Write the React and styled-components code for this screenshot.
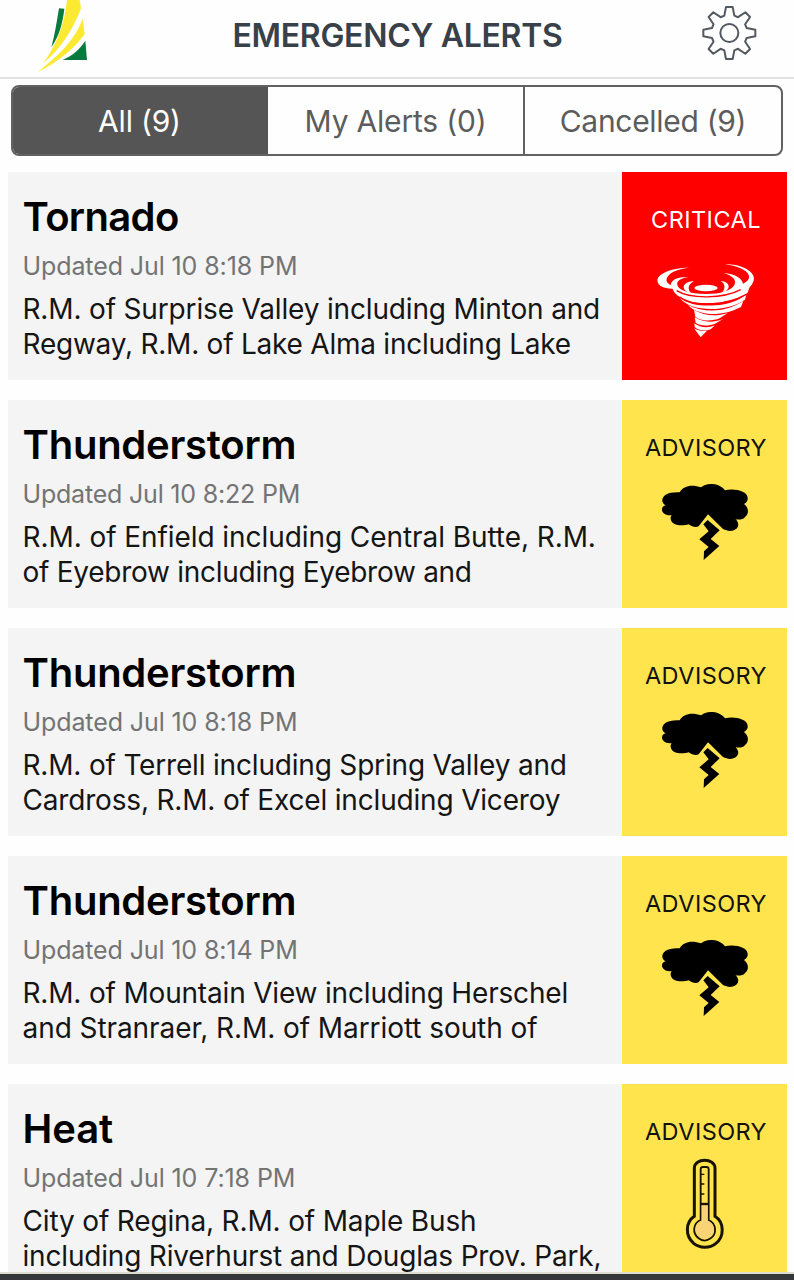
import React from 'react';
import styled, { createGlobalStyle, css } from 'styled-components';

const GlobalStyle = createGlobalStyle`
  * {
    box-sizing: border-box;
  }

  body {
    margin: 0;
    background-color: #fefefe;
    font-family: Inter, 'Liberation Sans', sans-serif;
    overflow: hidden;
  }
`;

const Screen = styled.div`
  display: flex;
  flex-direction: column;
  width: 794px;
  height: 1280px;
  overflow: hidden;
`;

const Header = styled.header`
  flex: none;
  display: grid;
  grid-template-columns: 90px 1fr 104px;
  height: 79px;
  padding-left: 20px;
  border-bottom: 2px solid #e1e1e1;
`;

const Title = styled.h1`
  margin: 0;
  padding-right: 5px;
  color: #38414a;
  font-size: 32px;
  font-weight: 600;
  line-height: 71px;
  letter-spacing: -0.3px;
  text-align: center;
  white-space: nowrap;
`;

const Icon = styled.svg`
  display: block;
  flex: none;
`;

const Tabs = styled.nav`
  flex: none;
  display: grid;
  grid-template-columns: 255px 257px 1fr;
  height: 71px;
  margin: 6px 11px 0;
  border: 2px solid #626262;
  border-radius: 8px;
  overflow: hidden;
`;

const Tab = styled.button`
  padding: 1px 0 0;
  border: none;
  border-right: 2px solid #626262;
  background-color: transparent;
  color: #5c5c5c;
  font-family: inherit;
  font-size: 30px;
  font-weight: 400;
  letter-spacing: ${(props) => props.$spacing}px;
  white-space: nowrap;

  &:last-child {
    border-right: none;
  }

  ${(props) =>
    props.$active &&
    css`
      background-color: #555;
      border-color: #555;
      color: #fff;
    `}
`;

const AlertList = styled.main`
  flex: 1;
  min-height: 0;
  display: flex;
  flex-direction: column;
  gap: 20px;
  padding: 15.5px 7px 0 7.5px;
  overflow: hidden;
`;

const Card = styled.article`
  flex: none;
  display: flex;
  height: 208px;
  background-color: #f4f4f4;
`;

const CardBody = styled.div`
  flex: 1;
  padding: 19px 0 0 15px;
  white-space: nowrap;
`;

const AlertName = styled.h2`
  margin: 0;
  color: #000;
  font-size: 40px;
  font-weight: 600;
  line-height: 52px;
  letter-spacing: ${(props) => props.$spacing}px;
`;

const Updated = styled.div`
  margin-top: 5px;
  color: #737373;
  font-size: 25px;
  line-height: 36px;
  letter-spacing: ${(props) => props.$spacing}px;
`;

const Areas = styled.div`
  margin-top: 8px;
`;

const AreaLine = styled.div`
  color: #151515;
  font-size: 28px;
  line-height: 35px;
  letter-spacing: ${(props) => props.$spacing}px;
`;

const Severity = styled.div`
  display: flex;
  flex-direction: column;
  align-items: center;
  width: 165px;
  padding-top: 30px;
  background-color: ${(props) => (props.$critical ? '#fe0000' : '#ffe44d')};
  color: ${(props) => (props.$critical ? '#fff' : '#111')};
`;

const SeverityLabel = styled.div`
  height: 40px;
  padding-left: 3px;
  font-size: 23.5px;
  line-height: 36px;
  letter-spacing: 0.45px;
`;

const BottomBar = styled.footer`
  flex: none;
  height: 8px;
  border-top: 2px solid #dedcd2;
  background-color: #34383b;
`;

function Logo() {
  return (
    <Icon width="90" height="77" viewBox="0 0 270 231">
      <path d="M117 25 L133 26 C128 70 118 107 94 142 C104 105 110 67 117 25Z" fill="#087a3d" />
      <path d="M141 0 H179 L183 25 C164 77 127 145 69 190 C103 145 134 80 141 0Z" fill="#fbe932" />
      <path d="M188 56 L194 103 C165 143 112 190 54 215 C111 170 164 122 188 56Z" fill="#fbe932" />
      <path d="M196 122 L201 180 H128 C157 166 178 150 196 122Z" fill="#087a3d" />
    </Icon>
  );
}

// one tooth, repeated every 45 degrees
const tooth = [
  [-15, -52],
  [-10, -78],
  [10, -78],
  [15, -52],
];

const gearPoints = Array.from({ length: 8 }, (_, i) => {
  const a = (i * Math.PI) / 4;
  return tooth.map(([x, y]) => [
    (118 + x * Math.cos(a) - y * Math.sin(a)).toFixed(1),
    (99 + x * Math.sin(a) + y * Math.cos(a)).toFixed(1),
  ]);
}).flat();

function Gear() {
  return (
    <Icon width="104" height="77" viewBox="0 0 312 231" fill="none" stroke="#535960" strokeWidth="6">
      <polygon points={gearPoints.map((p) => p.join(',')).join(' ')} strokeLinejoin="round" />
      <circle cx="118" cy="99" r="27" />
    </Icon>
  );
}

function Tornado() {
  return (
    <Icon width="130" height="108" viewBox="0 -24 390 324" fill="#fff">
      <path d="M148 53 C103 52 54 68 52 91 C53 109 75 117 98 116 C105 144 150 155 205 153 C258 151 307 134 330 111 C348 91 346 74 321 58 C303 47 278 43 255 43 C291 48 320 59 326 75 C330 85 324 93 309 101 C307 86 286 71 250 69 C278 77 291 91 283 105 C275 122 240 132 198 132 C149 132 116 121 112 105 C109 94 122 84 145 81 C113 80 94 89 92 105 C79 99 77 91 82 82 C90 66 115 57 148 53Z" />
      <path d="M162 94 C143 94 130 102 131 113 C133 122 141 127 153 129 C143 120 142 103 162 94Z" />
      <path d="M242 93 C257 94 267 101 266 111 C265 119 258 124 246 128 C256 117 257 102 242 93Z" />
      <ellipse cx="198" cy="114" rx="35" ry="10" />
      <path d="M102 119 C117 145 153 151 202 149 C255 147 300 133 329 112 L322 130 C289 151 246 160 202 160 C151 159 116 147 102 119Z" />
      <path d="M119 143 C147 164 184 169 226 166 C263 164 296 151 319 134 L315 149 C286 168 250 177 214 177 C170 176 137 167 119 143Z" />
      <path d="M144 165 C181 184 225 186 263 175 C281 170 297 161 310 153 L303 171 C276 185 244 193 212 192 C182 190 160 182 144 165Z" />
      <path d="M162 180 C195 198 228 201 264 188 L239 205 C216 214 180 214 166 200Z" />
      <path d="M164 202 C191 218 218 219 249 207 L225 221 C206 229 179 228 167 218Z" />
      <path d="M163 220 C182 234 204 235 225 226 L212 238 C194 245 174 241 164 231Z" />
      <path d="M162 235 C175 243 187 244 201 242 L182 262Z" />
      {/* gaps between the bands */}
      <g fill="none" stroke="#fe0000" strokeWidth="4">
        <path d="M110 122 C150 147 250 147 302 119" />
        <path d="M119 141 C158 171 253 169 321 132" />
      </g>
    </Icon>
  );
}

function Thunderstorm() {
  return (
    <Icon width="130" height="100" viewBox="0 0 390 300">
      <path
        d="M67 94 C65 77 83 65 119 67 C130 48 154 42 184 52 C194 38 238 36 255 61 C281 54 323 62 323 84 C324 91 320 98 312 102 C326 112 328 131 316 140 C309 149 299 150 287 148 C303 164 293 182 270 183 C263 182 257 181 249 177 L204 133 L176 169 C168 173 157 171 146 163 C127 169 91 168 92 143 C92 140 94 137 95 135 C77 138 65 128 66 117 C67 111 71 108 77 106 C71 103 68 99 67 94Z"
        fill="#000"
      />
      <path d="M190 163 L203 150 L239 181 L212 207 L238 228 L191 270 L192 244 L206 231 L178 208 L206 184Z" fill="#000" />
    </Icon>
  );
}

function Thermometer() {
  return (
    <Icon width="90" height="130" viewBox="0 9 270 390" fill="none">
      <path
        d="M103 196 V52 C103 20 165 20 165 52 V196 C193 214 194 257 167 278 C148 293 119 292 101 277 C75 254 76 214 103 196Z"
        stroke="#171300"
        strokeWidth="9"
      />
      <path
        d="M122 207 V55 Q122 48 129 48 H139 Q146 48 146 55 V207 C170 218 171 249 152 262 C140 271 126 270 115 261 C97 247 98 217 122 207Z"
        fill="#ffe44d"
        stroke="#171300"
        strokeWidth="5.5"
      />
      <path d="M125 162 H143 V209 C167 220 167 247 149 259 C139 266 126 266 118 258 C102 246 103 217 125 209Z" fill="#f8d476" />
      <path d="M122 159 H146" stroke="#171300" strokeWidth="7" />
      <path d="M123 70 H133 M123 99 H133 M123 129 H133" stroke="#171300" strokeWidth="4" />
    </Icon>
  );
}

// lines: [text, letter spacing]
const alerts = [
  {
    name: 'Tornado',
    nameSpacing: -0.65,
    updated: 'Updated Jul 10 8:18 PM',
    updatedSpacing: -0.1,
    critical: true,
    icon: Tornado,
    lines: [
      ['R.M. of Surprise Valley including Minton and', -0.16],
      ['Regway, R.M. of Lake Alma including Lake', -0.23],
    ],
  },
  {
    name: 'Thunderstorm',
    nameSpacing: -0.25,
    updated: 'Updated Jul 10 8:22 PM',
    updatedSpacing: -0.2,
    icon: Thunderstorm,
    lines: [
      ['R.M. of Enfield including Central Butte, R.M.', -0.07],
      ['of Eyebrow including Eyebrow and', -0.27],
    ],
  },
  {
    name: 'Thunderstorm',
    nameSpacing: -0.25,
    updated: 'Updated Jul 10 8:18 PM',
    updatedSpacing: -0.1,
    icon: Thunderstorm,
    lines: [
      ['R.M. of Terrell including Spring Valley and', -0.18],
      ['Cardross, R.M. of Excel including Viceroy', -0.18],
    ],
  },
  {
    name: 'Thunderstorm',
    nameSpacing: -0.25,
    updated: 'Updated Jul 10 8:14 PM',
    updatedSpacing: -0.12,
    icon: Thunderstorm,
    lines: [
      ['R.M. of Mountain View including Herschel', -0.18],
      ['and Stranraer, R.M. of Marriott south of', -0.07],
    ],
  },
  {
    name: 'Heat',
    nameSpacing: -0.1,
    updated: 'Updated Jul 10 7:18 PM',
    updatedSpacing: -0.1,
    icon: Thermometer,
    lines: [
      ['City of Regina, R.M. of Maple Bush', -0.16],
      ['including Riverhurst and Douglas Prov. Park,', -0.18],
    ],
  },
];

function AlertCard({ alert }) {
  const AlertIcon = alert.icon;

  return (
    <Card>
      <CardBody>
        <AlertName $spacing={alert.nameSpacing}>{alert.name}</AlertName>
        <Updated $spacing={alert.updatedSpacing}>{alert.updated}</Updated>
        <Areas>
          {alert.lines.map(([text, spacing]) => (
            <AreaLine key={text} $spacing={spacing}>
              {text}
            </AreaLine>
          ))}
        </Areas>
      </CardBody>
      <Severity $critical={alert.critical}>
        <SeverityLabel>{alert.critical ? 'CRITICAL' : 'ADVISORY'}</SeverityLabel>
        <AlertIcon />
      </Severity>
    </Card>
  );
}

function App() {
  return (
    <>
      <GlobalStyle />
      <Screen>
        <Header>
          <Logo />
          <Title>EMERGENCY ALERTS</Title>
          <Gear />
        </Header>
        <Tabs>
          <Tab $active $spacing={-0.2}>
            All (9)
          </Tab>
          <Tab $spacing={-0.2}>My Alerts (0)</Tab>
          <Tab $spacing={-0.3}>Cancelled (9)</Tab>
        </Tabs>
        <AlertList>
          {alerts.map((alert, i) => (
            <AlertCard key={i} alert={alert} />
          ))}
        </AlertList>
        <BottomBar />
      </Screen>
    </>
  );
}

export default App;
